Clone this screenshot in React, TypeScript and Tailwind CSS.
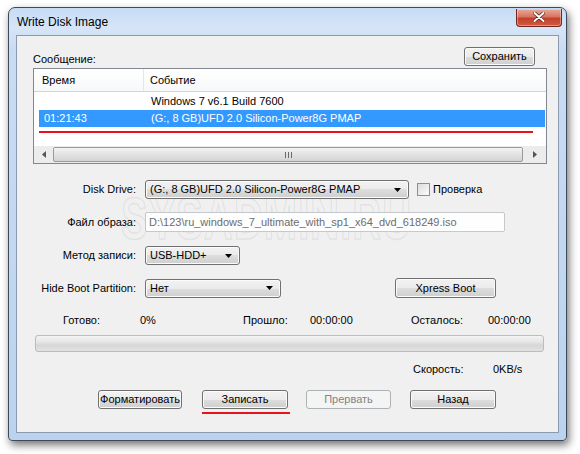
import React from "react";

const font = { fontFamily: '"Liberation Sans", Arial, sans-serif' };

function Btn({
    children,
    className = "",
    disabled = false,
}: {
    children: React.ReactNode;
    className?: string;
    disabled?: boolean;
}) {
    if (disabled) {
        return (
            <div
                className={`flex items-center justify-center rounded-[3px] border border-[#adb2b5] bg-[#f4f4f4] text-[11px] text-[#838383] ${className}`}
            >
                {children}
            </div>
        );
    }
    return (
        <div
            className={`flex items-center justify-center rounded-[3px] border border-[#707070] bg-[linear-gradient(to_bottom,#f2f2f2_0%,#ebebeb_50%,#dddddd_50%,#cfcfcf_100%)] text-[11px] text-black shadow-[inset_0_0_0_1px_#fbfbfb] ${className}`}
        >
            {children}
        </div>
    );
}

function Arrow({ className = "" }: { className?: string }) {
    return (
        <svg width="7" height="4" viewBox="0 0 7 4" className={className}>
            <polygon points="0,0 7,0 3.5,4" fill="#000" />
        </svg>
    );
}

function Combo({ value, className = "" }: { value: string; className?: string }) {
    return (
        <div
            className={`flex items-center justify-between rounded-[3px] border border-[#707070] bg-[linear-gradient(to_bottom,#f2f2f2_0%,#ebebeb_50%,#dddddd_50%,#cfcfcf_100%)] pl-[4px] pr-[7px] text-[11px] text-black shadow-[inset_0_0_0_1px_#fbfbfb] ${className}`}
        >
            <span>{value}</span>
            <Arrow />
        </div>
    );
}

function Label({ children }: { children: React.ReactNode }) {
    return <div className="w-[120px] shrink-0 pr-[1px] text-right text-[11px] text-black">{children}</div>;
}

export default function App() {
    return (
        <div className="h-[454px] w-[580px] overflow-hidden bg-white pl-[8px] pt-[7px]" style={font}>
            {/* Window */}
            <div className="relative flex h-[434px] w-[559px] flex-col rounded-t-[7px] rounded-b-[4px] border border-[#3e4a5a] bg-[linear-gradient(to_bottom,#c6dbf3_0px,#d6e5f7_20px,#c9dcf2_40px,#bcd3ee_100%)] px-[7px] pb-[7px] shadow-[2px_4px_9px_rgba(0,0,0,0.55)]">
                {/* Title bar */}
                <div className="flex h-[27px] items-center justify-between">
                    <span className="ml-[1px] mt-[1px] text-[12px] text-black">Write Disk Image</span>
                    <div className="-mr-[3px] -mt-[8px] flex h-[18px] w-[46px] items-center justify-center rounded-b-[4px] border border-t-0 border-[#6e2a22] bg-[linear-gradient(to_bottom,#e9a99b_0%,#d9765f_45%,#c2412c_55%,#d25a3e_100%)] shadow-[inset_0_0_0_1px_rgba(255,255,255,0.35)]">
                        <svg width="12" height="10" viewBox="0 0 12 10">
                            <path d="M1.5 1 L10.5 9 M10.5 1 L1.5 9" stroke="#5a1f18" strokeWidth="3.4" strokeLinecap="round" />
                            <path d="M1.5 1 L10.5 9 M10.5 1 L1.5 9" stroke="#ffffff" strokeWidth="2" strokeLinecap="round" />
                        </svg>
                    </div>
                </div>

                {/* Client area */}
                <div className="relative flex flex-1 flex-col border border-[#8a9bb0] bg-[#f0f0f0]">
                    {/* Watermark */}
                    <div className="pointer-events-none absolute left-[104px] top-[152px] origin-top scale-y-[1.5] text-[40px] font-bold leading-none tracking-[1px] text-transparent [-webkit-text-stroke:1px_#e2e2e2]">
                        SYSADMIN.RU
                    </div>

                    {/* Message header */}
                    <div className="relative mt-[11px] flex h-[19px] items-end justify-between pl-[16px] pr-[23px]">
                        <span className="mb-[-1px] text-[11px] text-black">Сообщение:</span>
                        <Btn className="h-[19px] w-[71px]">Сохранить</Btn>
                    </div>

                    {/* List view */}
                    <div className="relative ml-[16px] mt-[2px] flex h-[96px] w-[514px] flex-col border border-[#828790] bg-white">
                        <div className="flex h-[23px] items-center border-b border-[#d5d5d5] bg-[linear-gradient(to_bottom,#ffffff,#f7f8fa)] text-[11px] text-black">
                            <div className="flex h-full w-[110px] items-center border-r border-[#e3e5e8] pl-[8px]">Время</div>
                            <div className="pl-[6px]">Событие</div>
                        </div>
                        <div className="flex h-[18px] items-center text-[11px] text-black">
                            <div className="w-[111px]" />
                            <div className="pl-[6px]">Windows 7 v6.1 Build 7600</div>
                        </div>
                        <div className="ml-[5px] mr-[1px] flex h-[17px] items-center bg-[#3399ff] text-[11px] text-white">
                            <div className="w-[106px] pl-[5px]">01:21:43</div>
                            <div className="pl-[6px]">(G:, 8 GB)UFD 2.0 Silicon-Power8G PMAP</div>
                        </div>
                        <div className="ml-[5px] mt-[4px] h-[2px] w-[494px] bg-[#e8141b]" />
                        <div className="flex-1" />
                        {/* Horizontal scrollbar */}
                        <div className="flex h-[17px] items-center bg-[#ececec]">
                            <div className="flex w-[19px] items-center justify-center">
                                <svg width="4" height="7" viewBox="0 0 4 7">
                                    <polygon points="4,0 4,7 0,3.5" fill="#555" />
                                </svg>
                            </div>
                            <div className="flex h-[15px] w-[470px] items-center justify-center rounded-[2px] border border-[#9a9a9a] bg-[linear-gradient(to_bottom,#f4f4f4,#e2e2e2_50%,#d4d4d4)]">
                                <svg width="7" height="6" viewBox="0 0 7 6">
                                    <path d="M0.5 0 V6 M3.5 0 V6 M6.5 0 V6" stroke="#6a6a6a" strokeWidth="1" />
                                </svg>
                            </div>
                            <div className="flex flex-1 items-center justify-center">
                                <svg width="4" height="7" viewBox="0 0 4 7">
                                    <polygon points="0,0 0,7 4,3.5" fill="#555" />
                                </svg>
                            </div>
                        </div>
                    </div>

                    {/* Disk drive */}
                    <div className="relative mt-[16px] flex h-[19px] items-center">
                        <Label>Disk Drive:</Label>
                        <Combo className="ml-[8px] h-[19px] w-[264px]" value="(G:, 8 GB)UFD 2.0 Silicon-Power8G PMAP" />
                        <div className="ml-[8px] h-[13px] w-[13px] border border-[#8f8f8f] bg-[linear-gradient(135deg,#dcdcdc,#fbfbfb)]" />
                        <span className="ml-[3px] text-[11px] text-black">Проверка</span>
                    </div>

                    {/* Image file */}
                    <div className="relative mt-[13px] flex h-[20px] items-center">
                        <Label>Файл образа:</Label>
                        <div className="ml-[8px] flex h-[20px] w-[360px] items-center rounded-[2px] border border-[#c5c8cc] bg-white/90 pl-[3px] text-[11px] text-[#6d6d6d]">
                            D:\123\ru_windows_7_ultimate_with_sp1_x64_dvd_618249.iso
                        </div>
                    </div>

                    {/* Write method */}
                    <div className="relative mt-[14px] flex h-[19px] items-center">
                        <Label>Метод записи:</Label>
                        <Combo className="ml-[8px] h-[19px] w-[95px]" value="USB-HDD+" />
                    </div>

                    {/* Hide boot partition */}
                    <div className="relative mt-[13px] flex h-[20px] items-center">
                        <Label>Hide Boot Partition:</Label>
                        <Combo className="ml-[8px] h-[19px] w-[136px]" value="Нет" />
                        <Btn className="ml-[114px] h-[20px] w-[101px]">Xpress Boot</Btn>
                    </div>

                    {/* Stats */}
                    <div className="mt-[15px] flex h-[14px] items-center text-[11px] text-black">
                        <span className="ml-[46px] w-[77px]">Готово:</span>
                        <span className="w-[103px]">0%</span>
                        <span className="w-[67px]">Прошло:</span>
                        <span className="w-[101px]">00:00:00</span>
                        <span className="w-[77px]">Осталось:</span>
                        <span>00:00:00</span>
                    </div>

                    {/* Progress bar */}
                    <div className="ml-[18px] mt-[8px] h-[17px] w-[509px] rounded-[3px] border border-[#bcbcbc] bg-[linear-gradient(to_bottom,#f3f3f3,#e6e6e6_40%,#d6d6d6_60%,#e2e2e2)]" />

                    {/* Speed */}
                    <div className="mt-[10px] flex h-[14px] items-center text-[11px] text-black">
                        <span className="ml-[396px] w-[80px]">Скорость:</span>
                        <span>0KB/s</span>
                    </div>

                    {/* Buttons */}
                    <div className="mt-[14px] flex h-[19px] items-center">
                        <Btn className="ml-[81px] h-[19px] w-[84px] border-[#3c3c3c]">Форматировать</Btn>
                        <Btn className="ml-[20px] h-[19px] w-[86px]">Записать</Btn>
                        <Btn className="ml-[18px] h-[19px] w-[85px]" disabled>
                            Прервать
                        </Btn>
                        <Btn className="ml-[19px] h-[19px] w-[86px]">Назад</Btn>
                    </div>
                    <div className="ml-[185px] mt-[3px] h-[2px] w-[88px] bg-[#e8141b]" />
                </div>
            </div>
        </div>
    );
}
